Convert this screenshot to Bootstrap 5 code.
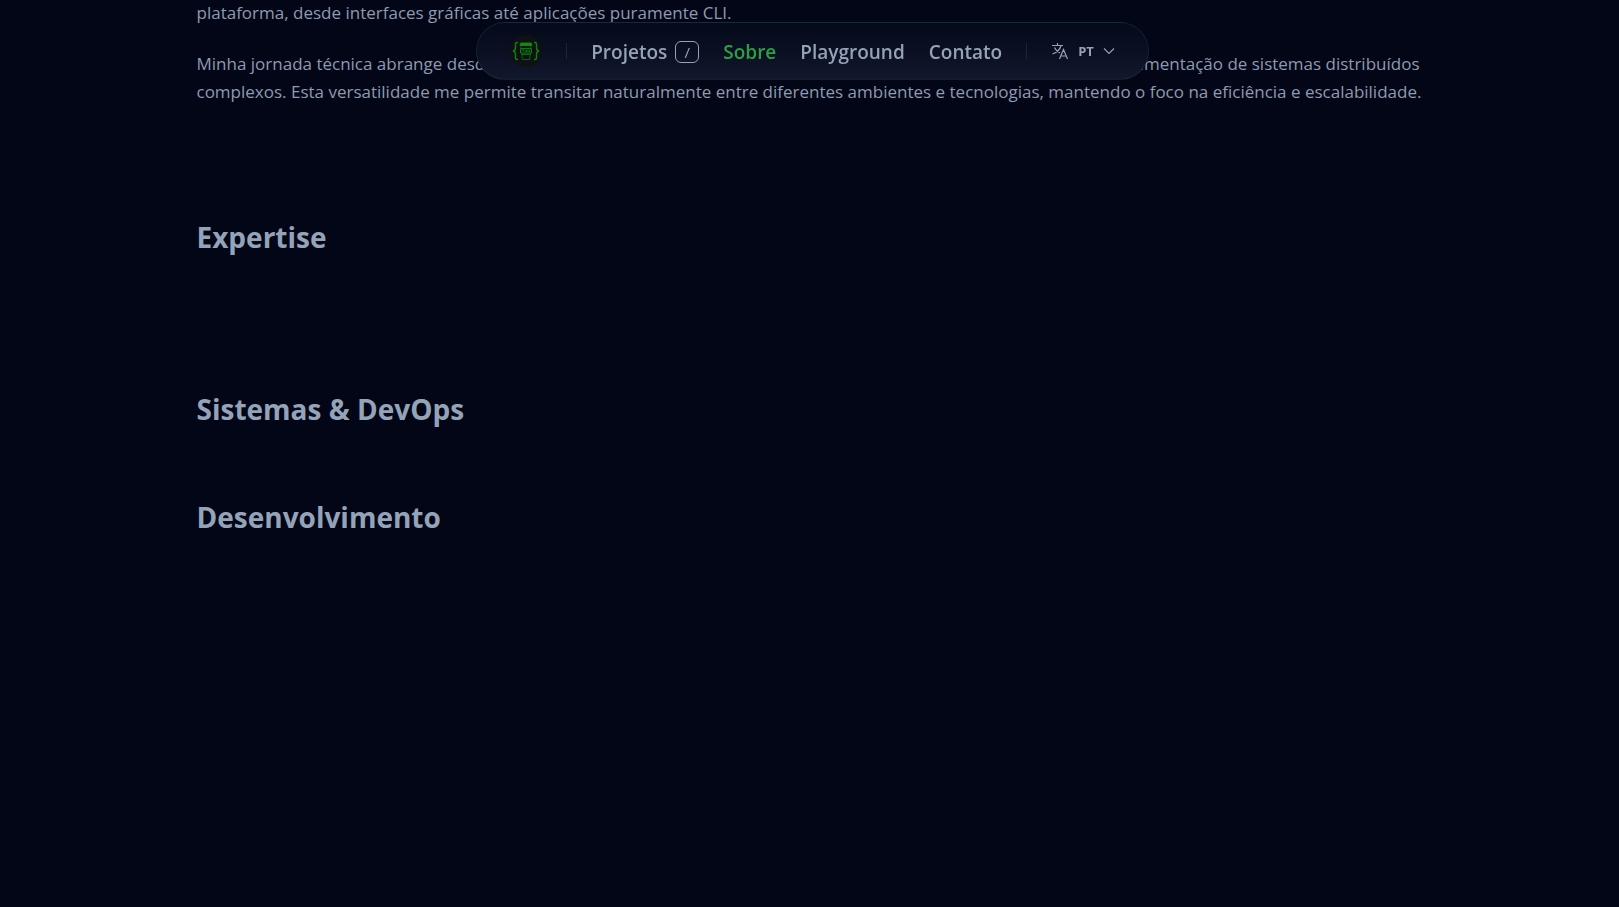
<!DOCTYPE html>
<html lang="pt-BR" data-bs-theme="dark">
<head>
<meta charset="utf-8">
<meta name="viewport" content="width=device-width, initial-scale=1">
<title>Sobre</title>
<link href="https://cdn.jsdelivr.net/npm/bootstrap@5.3.0/dist/css/bootstrap.min.css" rel="stylesheet">
<style>
  :root { --ink: #94a3b8; --body-ink: #8d9bb0; --accent: #2ea043; --page: #020617; --gutter: 6px; }
  body {
    background: var(--page);
    color: var(--ink);
    font-family: "Open Sans", "Noto Sans", sans-serif;
    font-size: 17px;
    line-height: 28px;
    padding-left: var(--gutter);
  }
  .page-wrap { max-width: 1280px; min-height: 100vh; padding: 0 24px; }
  .intro { color: var(--body-ink); line-height: 28px; }
  .intro p { margin-bottom: 24px; }
  .intro p:first-child { line-height: 26px; }
  .intro .first-line { max-width: 1223px; }
  .topic { font-size: 28px; line-height: 36px; font-weight: 700; color: var(--ink); margin: 0; }
  .topic-lead { margin-top: 113px; }
  .topic-systems { margin-top: 136px; }
  .topic-dev { margin-top: 72px; }

  .float-nav { top: 22px; padding-left: var(--gutter); }
  .pill {
    height: 58px;
    padding: 0 33px;
    gap: 24px;
    border: 1px solid rgba(46, 160, 100, .16);
    border-radius: 29px;
    background: linear-gradient(180deg, #050b1c 10%, #0a0f22 50%, #13172c);
  }
  .pill .nav-link { padding: 2px 0 0; color: var(--ink); font-size: 19px; font-weight: 600; line-height: 28px; }
  .pill .nav-link.active { color: var(--accent); }
  .pill-rule { width: 1px; height: 16px; background: rgba(148, 163, 184, .15); }
  .key {
    width: 24px; height: 22px; padding: 0;
    border: 1px solid var(--ink); border-radius: 6px;
    background: transparent; color: var(--ink);
    font-family: inherit; font-size: 15px; font-weight: 400; line-height: 20px;
  }
  .lang { padding: 0; border: 0; gap: 9px; color: var(--ink); font-size: 13px; font-weight: 700; line-height: 20px; }
</style>
</head>
<body>
<header class="float-nav position-fixed start-0 end-0 d-flex justify-content-center z-3">
  <nav class="pill d-flex align-items-center" aria-label="Principal">
    <a href="#" class="d-flex" aria-label="Início">
      <svg width="32" height="32" viewBox="0 0 32 32" fill="none" stroke="#128012" aria-hidden="true">
        <circle cx="16" cy="16" r="16" fill="#0f1112" stroke="none"/>
        <path d="M8 7.500H7q-1.500 0-1.500 1.500v4q0 2.500-2.500 3 2.500.5 2.500 3v4q0 1.500 1.500 1.500h1M24 7.500h1q1.500 0 1.500 1.500v4q0 2.500 2.500 3-2.500.5-2.500 3v4q0 1.500-1.500 1.500h-1" stroke-width="1.400"/>
        <path d="M10.500 8h11l.5 2.500H10z" fill="#109010"/>
        <path d="M11 11l1.300 13.500h7.400L21 11" stroke="#0c5c12"/>
        <path d="M10.500 13.500h11v4.500h-11z" fill="#0b240d" stroke="#0c7a12"/>
        <path d="M12.500 15h1.500M15 16h1M17 15v1.500M18.500 16h1.500" stroke="#17a517"/>
        <path d="M11.500 19.500h9" stroke="#0c6a12"/>
      </svg>
    </a>
    <span class="pill-rule"></span>
    <a href="#projetos" class="nav-link d-flex align-items-center gap-2">Projetos <kbd class="key text-center">/</kbd></a>
    <a href="#sobre" class="nav-link active" aria-current="page">Sobre</a>
    <a href="#playground" class="nav-link">Playground</a>
    <a href="#contato" class="nav-link">Contato</a>
    <span class="pill-rule"></span>
    <button type="button" class="lang btn d-flex align-items-center">
      <svg width="18" height="18" viewBox="0 0 18 18" fill="none" stroke="currentColor" stroke-width="1.200" aria-hidden="true">
        <path d="M1 3.500h11M6.500 1v2.500M10 3.500C9 7.500 5.500 10.500 1.500 12M3.500 5.500C4.500 8 6.500 9.800 9 11M8.500 17l4-9.500 4 9.500M10 14h5"/>
      </svg>
      <span>PT</span>
      <svg width="12" height="8" viewBox="0 0 12 8" fill="none" stroke="currentColor" stroke-width="1.100" aria-hidden="true"><path d="M1 1.500l5 5 5-5"/></svg>
    </button>
  </nav>
</header>

<main class="page-wrap mx-auto" id="sobre">
  <section class="intro">
    <p>plataforma, desde interfaces gráficas até aplicações puramente CLI.</p>
    <p><span class="first-line d-flex justify-content-between"><span>Minha jornada técnica abrange desde</span> <span>implementação de sistemas distribuídos</span></span>
    complexos. Esta versatilidade me permite transitar naturalmente entre diferentes ambientes e tecnologias, mantendo o foco na eficiência e escalabilidade.</p>
  </section>
  <section>
    <h2 class="topic topic-lead">Expertise</h2>
    <h2 class="topic topic-systems">Sistemas &amp; DevOps</h2>
    <h2 class="topic topic-dev">Desenvolvimento</h2>
  </section>
</main>
<script src="https://cdn.jsdelivr.net/npm/bootstrap@5.3.0/dist/js/bootstrap.bundle.min.js"></script>
</body>
</html>
